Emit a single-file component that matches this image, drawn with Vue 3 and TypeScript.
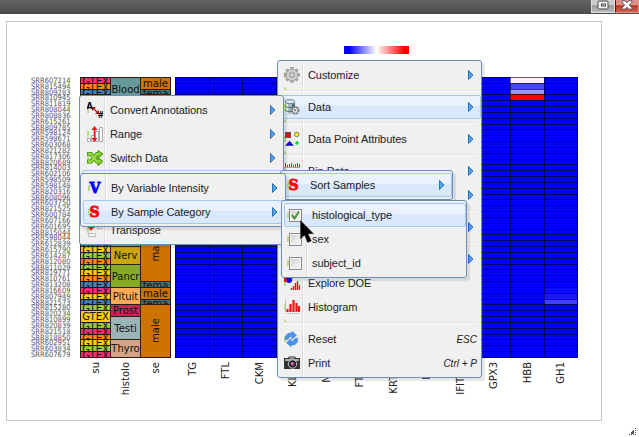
<script setup lang="ts">
interface MenuItem {
  label?: string
  icon?: string
  arrow?: boolean
  key?: string
  active?: boolean
  separator?: boolean
}
interface Menu {
  name: string
  items: MenuItem[]
}
interface Cell {
  from: number
  to: number
  color: string
  text: string
  vertical?: boolean
}

const samples: string[] = [
  '607214', '815494', '809283', '810945', '811819', '808044', '808836', '615261', '809785', '598124',
  '598671', '603068', '821282', '817306', '820689', '814003', '602106', '598509', '598148', '820316',
  '608096', '603750', '821525', '600784', '607166', '601695', '815044', '598044', '612839', '615790',
  '614287', '812080', '811029', '819771', '810761', '813208', '816609', '807949', '821573', '815280',
  '820234', '810899', '820839', '821518', '818850', '602951', '603834', '607679',
].map((n) => 'SRR' + n)

const genes: string[] = ['TG', 'FTL', 'CKM', 'KLK3', 'NEB', 'FTH1', 'KRT13', 'PLP', 'IFITM3', 'GPX3', 'HBB', 'GH1']

const top = (i: number): number => 77 + Math.round(i * 5.833)
const left = (c: number): number => 175 + Math.round(c * 33.5)

const heat: Record<string, string> = {
  '10-0': '#fff0ee', '10-1': '#4646ff', '10-2': '#9898ff', '10-3': '#ff0000',
  '11-36': '#0c0cff', '11-37': '#1818ff', '11-38': '#4040ff',
}
const shade = Object.entries(heat).map(([key, color]) => {
  const [c, r] = key.split('-').map(Number)
  return { x: left(c), y: top(r), w: left(c + 1) - left(c), h: top(r + 1) - top(r), color }
})

const pink = '#ff2e70'
const orange = '#ff8a0a'
const blue = '#447fb6'
const yellow = '#fcca0c'
const green = '#9ac936'
const one = (from: number, color: string): Cell => ({ from, to: from + 1, color, text: 'GTEX' })

const subject: Cell[] = [
  one(0, pink), one(1, orange), one(2, blue),
  { from: 3, to: 28, color: green, text: '' },
  one(28, pink), one(29, yellow), one(30, green), one(31, orange), one(32, green), one(33, yellow),
  one(34, orange), one(35, blue), one(36, pink), one(37, yellow), one(38, blue), one(39, green),
  { from: 40, to: 42, color: yellow, text: 'GTEX' },
  one(42, green), one(43, pink), one(44, orange), one(45, yellow), one(46, green), one(47, pink),
]
const tissue: Cell[] = [
  { from: 0, to: 4, color: '#669999', text: 'Blood' },
  { from: 4, to: 29, color: '#ff5fae', text: '' },
  { from: 29, to: 32, color: '#cca60c', text: 'Nerv' },
  { from: 32, to: 36, color: '#85ac24', text: 'Pancr' },
  { from: 36, to: 39, color: '#ffaa55', text: 'Pituit' },
  { from: 39, to: 41, color: '#d12058', text: 'Prost' },
  { from: 41, to: 45, color: '#99b5b5', text: 'Testi' },
  { from: 45, to: 48, color: '#d3a485', text: 'Thyro' },
]
const sex: Cell[] = [
  { from: 0, to: 2, color: '#cf7200', text: 'male' },
  { from: 2, to: 3, color: '#477272', text: 'fema' },
  { from: 3, to: 24, color: '#cf7200', text: '' },
  { from: 24, to: 35, color: '#cf7200', text: 'male', vertical: true },
  { from: 35, to: 36, color: '#477272', text: 'fema' },
  { from: 36, to: 38, color: '#cf7200', text: 'male' },
  { from: 38, to: 39, color: '#477272', text: 'fema' },
  { from: 39, to: 48, color: '#cf7200', text: 'male', vertical: true },
]
const annotations = [
  { title: 'su', x: 80, cells: subject },
  { title: 'histolo', x: 110, cells: tissue },
  { title: 'se', x: 140, cells: sex },
]
const size = (c: Cell): number => top(c.to) - top(c.from)
const mid = (c: Cell): number => (top(c.from) + top(c.to)) / 2
// single-row cells are shorter than their text, which is cropped at the cell's lower edge
const baseline = (c: Cell): number => (c.to - c.from === 1 ? 8 : size(c) / 2 + 4)

const sep: MenuItem = { separator: true }
const menus: Menu[] = [
  {
    name: 'main',
    items: [
      { label: 'Customize', icon: 'gear', arrow: true }, sep,
      { label: 'Data', icon: 'db', arrow: true, active: true }, sep,
      { label: 'Data Point Attributes', icon: 'points', arrow: true }, sep,
      { label: 'Bin Data', icon: 'bin', arrow: true },
      { arrow: true }, sep,
      { arrow: true }, sep,
      { arrow: true },
      { label: 'Explore DOE', icon: 'doe' },
      { label: 'Histogram', icon: 'hist' }, sep,
      { label: 'Reset', icon: 'reset', key: 'ESC' },
      { label: 'Print', icon: 'camera', key: 'Ctrl + P' },
    ],
  },
  {
    name: 'data',
    items: [
      { label: 'Convert Annotations', icon: 'convert', arrow: true },
      { label: 'Range', icon: 'range', arrow: true },
      { label: 'Switch Data', icon: 'switch', arrow: true },
      { arrow: true, active: true },
      { arrow: true },
      { label: 'Transpose', icon: 'transpose' },
    ],
  },
  { name: 'sort', items: [{ label: 'Sort Samples', icon: 's', arrow: true, active: true }] },
  {
    name: 'by',
    items: [
      { label: 'By Variable Intensity', icon: 'v', arrow: true },
      { label: 'By Sample Category', icon: 's', arrow: true, active: true },
    ],
  },
  {
    name: 'category',
    items: [
      { label: 'histological_type', icon: 'checked', active: true },
      { label: 'sex', icon: 'box' },
      { label: 'subject_id', icon: 'box' },
    ],
  },
]
const teeth = [0, 45, 90, 135, 180, 225, 270, 315]
</script>

<template>
  <div class="window">
    <header class="titlebar">
      <span class="tool">
        <svg width="12" height="10" viewBox="0 0 12 10"><rect x="1" y="1" width="10" height="8" rx="1" fill="#f2f2f2" stroke="#4d4d4d" /><rect x="4.5" y="4" width="4" height="2" fill="#ddd" stroke="#4d4d4d" /></svg>
      </span>
      <span class="tool close">
        <svg width="12" height="10" viewBox="0 0 12 10"><path d="M1 .8h3.2L6 2.8 7.8.8H11v1.4L8.4 5 11 7.8v1.4H7.8L6 7.2 4.2 9.2H1V7.8L3.6 5 1 2.2z" fill="#fff" stroke="#555" /></svg>
      </span>
    </header>

    <main class="chart">
      <svg width="594" height="398" viewBox="7 22 594 398">
        <defs>
          <linearGradient id="scale"><stop offset="0" stop-color="#00f" /><stop offset=".08" stop-color="#00f" /><stop offset=".5" stop-color="#fff" /><stop offset=".93" stop-color="#f00" /><stop offset="1" stop-color="#f00" /></linearGradient>
        </defs>
        <rect x="344" y="46" width="65" height="8" fill="url(#scale)" />
        <g class="samples">
          <text v-for="(s, i) in samples" :key="s" x="70.5" :y="top(i) + 6" textLength="39.5" lengthAdjust="spacingAndGlyphs">{{ s }}</text>
        </g>
        <g class="ann">
          <template v-for="a in annotations" :key="a.title">
            <g v-for="c in a.cells" :key="c.from">
              <rect :x="a.x + 0.5" :y="top(c.from) + 0.5" width="30" :height="size(c)" :fill="c.color" stroke="#2b1d10" />
              <text v-if="c.vertical" :transform="`translate(${a.x + 19} ${mid(c)}) rotate(-90)`">{{ c.text }}</text>
              <svg v-else :x="a.x" :y="top(c.from)" width="31" :height="size(c)">
                <text x="15.5" :y="baseline(c)">{{ c.text }}</text>
              </svg>
            </g>
          </template>
        </g>
        <rect x="175" y="77" width="403" height="281" fill="#00f" />
        <rect v-for="s in shade" :key="`${s.x}-${s.y}`" :x="s.x" :y="s.y" :width="s.w" :height="s.h" :fill="s.color" />
        <g class="grid">
          <line v-for="i in 49" :key="'h' + i" x1="175" x2="578" :y1="top(i - 1) + 0.5" :y2="top(i - 1) + 0.5" />
          <line v-for="i in 13" :key="'v' + i" y1="77" y2="358" :x1="left(i - 1) + 0.5" :x2="left(i - 1) + 0.5" />
        </g>
        <g class="axis">
          <text v-for="a in annotations" :key="a.title" :transform="`translate(${a.x + 19} 362) rotate(-90)`">{{ a.title }}</text>
          <text v-for="(g, i) in genes" :key="g" :transform="`translate(${175 + i * 33.5 + 20.5} 362) rotate(-90)`">{{ g }}</text>
        </g>
      </svg>
    </main>

    <nav v-for="m in menus" :key="m.name" class="menu" :class="m.name">
      <div v-for="(it, i) in m.items" :key="i" :class="it.separator ? 'sep' : ['item', { active: it.active }]">
        <template v-if="!it.separator">
          <span class="icon">
            <svg v-if="it.icon === 'gear'" width="16" height="16" viewBox="-8 -8 16 16">
              <g fill="#aaa" stroke="#888" stroke-width=".5"><rect v-for="t in teeth" :key="t" x="-1.3" y="-7.6" width="2.6" height="4" :transform="`rotate(${t})`" /></g>
              <circle r="4.3" fill="none" stroke="#888" stroke-width="3.2" /><circle r="4.3" fill="none" stroke="#d2d2d2" stroke-width="2.2" /><circle r="2" fill="#f0f0f0" stroke="#888" />
            </svg>
            <svg v-else-if="it.icon === 'db'" width="16" height="16">
              <path d="M1 2.5v10c0 3 10 3 10 0v-10z" fill="#a9bac4" /><path d="M2 4h2v10H2z" fill="#e6eff3" /><path d="M8 4h3v9H8z" fill="#547080" />
              <ellipse cx="6" cy="2.7" rx="5" ry="2" fill="#dceaf0" stroke="#6b8493" /><path d="M1 7c1 2 9 2 10 0M1 11c1 2 9 2 10 0" fill="none" stroke="#4f6977" />
              <circle cx="11.3" cy="11.3" r="3.2" fill="#eee" stroke="#777" stroke-width="2" stroke-dasharray="2 .6" /><circle cx="11.3" cy="11.3" r="1" fill="#667" />
            </svg>
            <svg v-else-if="it.icon === 'points'" width="16" height="16">
              <rect x="1.5" y="1.5" width="5" height="5" fill="#f00" stroke="#555" /><circle cx="12.7" cy="3.5" r="2.2" fill="#ff0" stroke="#777" /><path d="M1.5 14.5 5.500 10l4 4.500z" fill="#00f" stroke="#334" stroke-width=".6" /><circle cx="13" cy="12" r="1.8" fill="#0d2" />
            </svg>
            <svg v-else-if="it.icon === 'bin'" width="16" height="16">
              <path d="M1.500 0v4M3.500 2v2M5.500 1v3M7.500 0v4M9.500 2v2M11.500 1v3M13.500 0v4M15.500 1v3" stroke="#e22" /><path d="M0 4.500h16" stroke="#c99" /><path d="M8 7v4" stroke="#333" />
            </svg>
            <svg v-else-if="it.icon === 'doe'" width="16" height="16">
              <path d="M0 0h5v4H0z" fill="#e00" /><path d="M5 0h4v4H5z" fill="#0d2" /><circle cx="5" cy="5" r="3" fill="#00f" /><path d="M0 4h3v3H0z" fill="#e11" /><path d="M7.500 15v-2M9.500 15v-4M11.500 15V8M13.500 15V6M15.500 15v-5" stroke="#e11" stroke-width="1.4" />
            </svg>
            <svg v-else-if="it.icon === 'hist'" width="16" height="16">
              <path d="M1.500 0v14M2 14.500h14" stroke="#aaa" stroke-dasharray="1 1" /><path d="M3.500 13v-3M6.500 13V5M9.500 13V1M12.500 13V4M15 13V7" stroke="#e11" stroke-width="2.2" />
            </svg>
            <svg v-else-if="it.icon === 'reset'" width="16" height="16" fill="#4a92ee" stroke="#3276cf" stroke-width=".5">
              <path d="M1.500 9C.5 4.500 3.500 1.500 8 2V.300l4.500 4-4.500 4V6C5.500 5.500 4.500 6.500 4.800 8z" /><path d="M13.500 7c1 4.500-2 7.500-6.500 7v1.700l-4.500-4 4.500-4V10c2.500.5 3.500-.5 3.200-2z" />
            </svg>
            <svg v-else-if="it.icon === 'camera'" width="16" height="16">
              <path d="M0 3h4l1-1.500h6L12 3h4v11H0z" fill="#333" /><path d="M1 4h14v2H1z" fill="#aaa" /><path d="M5.500 2.500h5v1h-5z" fill="#ddd" /><circle cx="8.500" cy="9" r="4.200" fill="#222" stroke="#ccc" /><circle cx="8.500" cy="9" r="2" fill="#a2459d" /><circle cx="8" cy="8.400" r=".7" fill="#fff" />
            </svg>
            <svg v-else-if="it.icon === 'convert'" width="16" height="16">
              <path d="m6.500 6.500 4 4" stroke="#a11" stroke-width="1.200" /><path d="M5 5h4L5 9zM12 12H8l4-4z" fill="#a11" />
              <text x="-.5" y="6.500" class="mini">A</text><text x="10.500" y="16" class="mini">#</text>
            </svg>
            <svg v-else-if="it.icon === 'range'" width="16" height="16">
              <path d="M.5 12.500h3v3h-3zM4.500 9.500h3v6h-3zM8.500 5.500h3v10h-3zM12.500 1.500h3v14h-3z" fill="#fff" stroke="#aaa" /><path d="M7.500 2v12" stroke="#e11" stroke-width="1.500" /><path d="m7.500 0 3 4h-6zM7.500 16l3-4h-6z" fill="#e11" />
            </svg>
            <svg v-else-if="it.icon === 'switch'" width="16" height="16">
              <path d="M0 4h4l6 7.500h2M0 11.500h4L10 4h2" fill="none" stroke="#448c08" stroke-width="4" /><path d="M11 .5 16 4l-5 4zM11 7.500l5 4-5 4z" fill="#8bce32" stroke="#448c08" /><path d="M.7 4H4l6 7.500h2M.7 11.500H4L10 4h2" fill="none" stroke="#97d940" stroke-width="2.400" />
            </svg>
            <svg v-else-if="it.icon === 'transpose'" width="16" height="16">
              <path d="M10.500 1.500h4v5h-4zM1.500 11.500h7v3h-7z" fill="#f5f5f5" stroke="#bbb" /><path d="M4 1v6M2 5h6" stroke="#e11" stroke-width="1.500" /><path d="m1 5 3 4 3-4z" fill="#e11" />
            </svg>
            <span v-else-if="it.icon === 'v' || it.icon === 's'" class="letter" :class="it.icon">{{ it.icon.toUpperCase() }}</span>
            <span v-else-if="it.icon === 'box' || it.icon === 'checked'" class="check">
              <svg v-if="it.icon === 'checked'" width="9" height="9"><path d="m1 4 2.500 3.500L8 .5" fill="none" stroke="#4b9438" stroke-width="2" /></svg>
            </span>
          </span>
          <span class="label">{{ it.label }}</span>
          <span v-if="it.key" class="key">{{ it.key }}</span>
          <svg v-if="it.arrow" class="arrow" width="6" height="10"><path d="M.5.5 5 5 .5 9.500z" fill="#4fa3e8" stroke="#2b72bd" /></svg>
        </template>
      </div>
    </nav>

    <svg class="cursor" width="14" height="24"><path d="M.5.5v18.500l4-4 3.200 7.500 3.600-1.600L8 13.700h5.500z" fill="#000" stroke="#333" stroke-width=".5" /></svg>
    <svg class="grip" width="8" height="8"><path d="M6 0h1v1H6zM4 2h1v1H4zM6 2h1v1H6zM2 4h1v1H2zM4 4h1v1H4zM6 4h1v1H6zM0 6h1v1H0zM2 6h1v1H2zM4 6h1v1H4zM6 6h1v1H6zM3 3h2v3H2z" fill="#555" /></svg>
  </div>
</template>

<style>
body {
  background: #fff;
  overflow: hidden;
}
</style>

<style scoped>
.window {
  position: relative;
  width: 639px;
  height: 437px;
  overflow: hidden;
  background: #fff;
  font: 11px "Liberation Sans", Arial, sans-serif;
  color: #222;
}
.titlebar {
  height: 14px;
  display: flex;
  justify-content: flex-end;
  background: linear-gradient(#656565, #4a4a4a);
}
.tool {
  box-sizing: border-box;
  width: 24px;
  height: 13px;
  display: flex;
  justify-content: center;
  align-items: flex-start;
  border: solid #ddd;
  border-width: 0 1px 1px;
  background: linear-gradient(#ccc 0 45%, #999 46%, #bbb);
}
.tool.close {
  border-color: #e5988b;
  border-left-color: #611;
  background: linear-gradient(#dd9185 0 45%, #b83825 46%, #d06050);
}
.chart {
  width: 594px;
  height: 398px;
  margin: 7px 0 0 6px;
  border: 1px solid #c8c8c8;
}
.chart > svg {
  display: block;
  font-family: "DejaVu Sans", sans-serif;
}
.samples text {
  font-size: 7.4px;
  fill: #555;
  text-anchor: end;
}
.ann text {
  font-size: 10px;
  fill: #111;
  text-anchor: middle;
}
.axis text {
  font-size: 10px;
  fill: #222;
  text-anchor: end;
}
.grid line {
  stroke: rgba(0, 0, 20, 0.62);
}
.menu {
  position: absolute;
  box-sizing: border-box;
  padding: 2px 0 2px 2px;
  border: 1px solid #6d8fbe;
  border-radius: 3px;
  background: linear-gradient(90deg, transparent 24px, #ddd 24px 25px, #fff 25px 26px, transparent 26px) #f0f0f0;
  box-shadow: 3px 3px 1px rgba(60, 60, 60, 0.13);
}
.main { left: 277px; top: 60px; width: 205px; }
.data { left: 79px; top: 95px; width: 205px; }
.sort { left: 280px; top: 170px; width: 173px; }
.by { left: 80px; top: 173px; width: 206px; }
.category { left: 281px; top: 200px; width: 186px; }
.item {
  box-sizing: border-box;
  height: 24px;
  display: flex;
  align-items: center;
  padding: 0 7px 0 4px;
  border: 1px solid transparent;
  border-right-width: 0;
}
.item.active {
  border: 1px solid #a5c8ef;
  padding-right: 6px;
  border-radius: 2px;
  background: linear-gradient(#eaf3fd 0 45%, #d9e8fa 46%);
}
.icon {
  width: 16px;
  height: 16px;
  margin-right: 7px;
  display: flex;
  align-items: center;
  justify-content: center;
  background: linear-gradient(90deg, #b9df8a 2px, transparent 2px) 0 5px / 2px 6px no-repeat;
}
.main .icon { margin-left: -1px; margin-right: 8px; }
.sort .icon { margin-left: -1px; }
.category .icon { margin-left: -2px; margin-right: 9px; }
.label {
  flex: 1;
  white-space: nowrap;
  letter-spacing: -0.08px;
}
.key {
  font-size: 10px;
  font-style: italic;
  margin-right: -3px;
}
.sep {
  height: 8px;
  display: flex;
  align-items: center;
  padding-right: 4px;
}
.sep::before {
  content: "";
  align-self: flex-start;
  border: solid transparent;
  border-width: 2px 0 2px 3px;
  border-left-color: #b9df8a;
  margin-left: 4px;
}
.sep::after {
  content: "";
  flex: 1;
  height: 1px;
  margin-left: -3px;
  background: #e0e0e0;
  border-bottom: 1px solid #fff;
}
.letter {
  margin-left: -2px;
  font: bold 15.5px/16px "DejaVu Serif", serif;
  color: #f00;
  transform: scaleX(0.9);
  -webkit-text-stroke: 0.9px currentColor;
}
.letter.v { color: #00f; }
.mini {
  font: bold 8px "DejaVu Sans", sans-serif;
}
.check {
  box-sizing: border-box;
  width: 13px;
  height: 13px;
  display: flex;
  align-items: center;
  justify-content: center;
  border: 1px solid #888;
  box-shadow: inset 0 0 0 1px #f8f8f8;
  background: linear-gradient(135deg, #ccc, #fff);
}
.cursor {
  position: absolute;
  left: 300px;
  top: 220px;
}
.grip {
  position: absolute;
  left: 629px;
  top: 428px;
}
</style>
